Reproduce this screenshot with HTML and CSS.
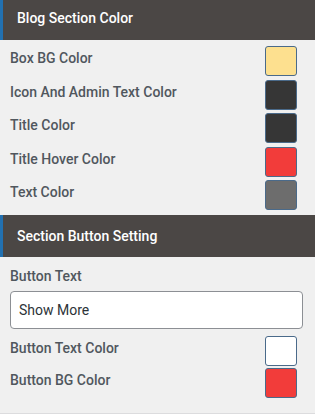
FILE: index.html
```html
<!DOCTYPE html>
<html>
<head>
<meta charset="utf-8">
<link rel="stylesheet" href="styles.css">
</head>
<body>
<div class="panel">
  <div class="head head-first">Blog Section Color</div>
  <div class="rows">
    <div class="row"><span class="label">Box BG Color</span><span class="swatch sw-yellow"></span></div>
    <div class="row"><span class="label">Icon And Admin Text Color</span><span class="swatch sw-dark"></span></div>
    <div class="row"><span class="label">Title Color</span><span class="swatch sw-dark"></span></div>
    <div class="row"><span class="label">Title Hover Color</span><span class="swatch sw-red"></span></div>
    <div class="row"><span class="label">Text Color</span><span class="swatch sw-gray"></span></div>
  </div>
  <div class="head">Section Button Setting</div>
  <div class="rows rows-btn">
    <div class="field-label">Button Text</div>
    <input class="text-input" type="text" value="Show More">
    <div class="row"><span class="label">Button Text Color</span><span class="swatch sw-white"></span></div>
    <div class="row"><span class="label">Button BG Color</span><span class="swatch sw-red"></span></div>
  </div>
</div>
</body>
</html>
```
FILE: styles.css
```css
html, body {
  margin: 0;
  padding: 0;
  background: #ffffff;
}
body {
  font-family: Roboto, "Liberation Sans", sans-serif;
  width: 315px;
  height: 416px;
  overflow: hidden;
}
.panel {
  background: #f0f0f0;
  border-bottom: 1px solid #dcdcde;
  box-sizing: border-box;
  height: 414px;
}
.head {
  background: #4b4745;
  color: #ffffff;
  font-size: 14px;
  font-weight: 500;
  height: 42px;
  line-height: 42px;
  padding-left: 14px;
  border-left: 3px solid #2271b1;
}
.head-first {
  height: 40px;
  line-height: 36px;
}
.rows {
  display: flex;
  flex-direction: column;
  gap: 3.5px;
  padding: 6px 18px 5px 10px;
}
.row {
  display: flex;
  justify-content: space-between;
  align-items: flex-start;
  height: 30px;
}
.label {
  color: #50575e;
  font-size: 14px;
  font-weight: 500;
  line-height: 20px;
  padding-top: 2px;
}
.swatch {
  width: 32px;
  height: 30px;
  box-sizing: border-box;
  border: 1px solid #4a6a8a;
  border-radius: 3px;
}
.sw-yellow { background: #fde08f; }
.sw-dark { background: #363636; }
.sw-red { background: #f23c3a; }
.sw-gray { background: #6d6d6d; }
.sw-white { background: #ffffff; }
.rows-btn {
  gap: 0;
  padding-top: 9px;
}
.field-label {
  color: #50575e;
  font-size: 14px;
  font-weight: 500;
  line-height: 20px;
  margin-bottom: 5px;
}
.text-input {
  box-sizing: border-box;
  width: 293px;
  height: 38px;
  border: 1px solid #8c8f94;
  border-radius: 4px;
  background: #ffffff;
  padding: 0 8px;
  font-family: Roboto, "Liberation Sans", sans-serif;
  font-size: 14px;
  color: #2c3338;
  margin-bottom: 6.5px;
  outline: none;
}
.rows-btn .row {
  height: 29.5px;
}
.rows-btn .row + .row {
  margin-top: 3px;
}
```
